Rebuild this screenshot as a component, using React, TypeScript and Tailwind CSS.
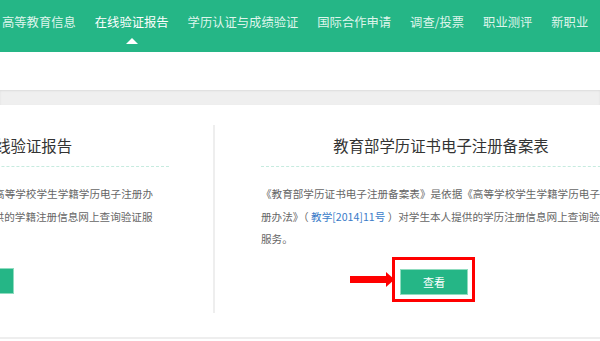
import React from "react";

const font = { fontFamily: '"Noto Sans CJK SC", "Noto Sans", sans-serif' };

const navItems = [
  "高等教育信息",
  "在线验证报告",
  "学历认证与成绩验证",
  "国际合作申请",
  "调查/投票",
  "职业测评",
  "新职业",
  "(",
];

export default function App() {
  return (
    <div className="relative w-[600px] h-[341px] overflow-hidden bg-white" style={font}>
      {/* Top nav */}
      <nav className="flex h-[52px] items-center gap-[19px] bg-[#25b686] pl-[2px] pb-[8px]">
        {navItems.map((item, i) => (
          <div
            key={item}
            className={
              "relative flex-none whitespace-nowrap text-[12.3px] leading-[16px] " +
              (i === 1 ? "text-white" : "text-[#dff5ec]")
            }
          >
            {item}
            {i === 1 && (
              <span className="absolute left-1/2 top-[24px] -translate-x-1/2 w-0 h-0 border-l-[6px] border-r-[6px] border-b-[6px] border-l-transparent border-r-transparent border-b-white" />
            )}
          </div>
        ))}
      </nav>

      {/* white strip */}
      <div className="h-[38px] bg-white" />
      {/* gray band */}
      <div className="h-[15px] bg-[#efefef] shadow-[inset_0_1px_2px_rgba(0,0,0,0.08)]" />

      {/* card area */}
      <div className="h-[234px] border-b-2 border-[#eeeeee] pt-[20px]">
        <div className="flex ml-[-223px]">
          {/* left card */}
          <div className="flex-none w-[436px] pl-[45px] pr-[44px] pb-[19px]">
            <div className="w-[347px]">
              <h2 className="mt-[10px] text-center text-[15.4px] leading-[20px] text-[#333] pr-[16px] whitespace-nowrap">
                教育部学籍在线验证报告
              </h2>
              <div className="mt-[11px] border-t border-dashed border-[#c6ebdf]" />
              <div className="mt-[16px] ml-[-8px] text-[10.6px] leading-[22.5px] text-[#666] whitespace-nowrap">
                <div>《教育部学籍在线验证报告》是依据《高等学校学生学籍学历电子注册办</div>
                <div>
                  法》（ <span className="text-[#3a7bc8]">教学[2014]11号</span> ）对学生本人提供的学籍注册信息网上查询验证服
                </div>
                <div>务。</div>
              </div>
              <div className="mt-[17.5px] ml-[124px] w-[68px] h-[26px] bg-[#25b686] border border-[#8fdcbf]" />
            </div>
          </div>

          {/* separator */}
          <div className="flex-none w-[2px] bg-[#eeeeee]" />

          {/* right card */}
          <div className="flex-none w-[420px] pl-[46px] pb-[19px]">
            <div className="w-[360px]">
              <h2 className="mt-[10px] text-center text-[15.4px] leading-[20px] text-[#333] whitespace-nowrap">
                教育部学历证书电子注册备案表
              </h2>
              <div className="mt-[11px] border-t border-dashed border-[#c6ebdf]" />
              <div className="mt-[16px] text-[10.6px] leading-[22.5px] text-[#666] whitespace-nowrap">
                <div>《教育部学历证书电子注册备案表》是依据《高等学校学生学籍学历电子注</div>
                <div>
                  册办法》（ <span className="text-[#3a7bc8]">教学[2014]11号</span> ）对学生本人提供的学历注册信息网上查询验证
                </div>
                <div>服务。</div>
              </div>
              <div className="relative mt-[17.5px] ml-[139px] w-[68px] h-[26px]">
                <button className="w-full h-full bg-[#25b686] border border-[#8fdcbf] text-white text-[11px] leading-[24px]">
                  查看
                </button>
                {/* red annotation box */}
                <div className="absolute left-[-8px] right-[-7px] top-[-11px] bottom-[-8px] border-[3px] border-[#ff0000] pointer-events-none" />
                {/* arrow */}
                <svg
                  className="absolute left-[-52px] top-[0px]"
                  width="50"
                  height="26"
                  viewBox="0 0 50 26"
                >
                  <rect x="2" y="8" width="38" height="7" fill="#ff0000" />
                  <polygon points="38,4 46.5,11.5 38,19" fill="#ff0000" />
                </svg>
              </div>
            </div>
          </div>
        </div>
      </div>
    </div>
  );
}
